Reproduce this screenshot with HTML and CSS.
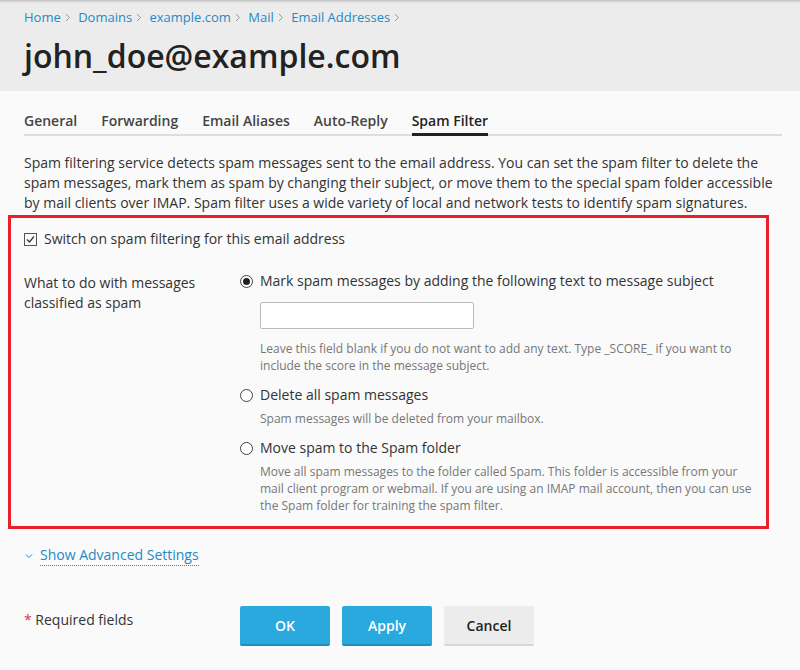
FILE: index.html
```html
<!DOCTYPE html>
<html lang="en">
<head>
    <meta charset="UTF-8">
    <title>john_doe@example.com</title>
    <link rel="stylesheet" href="styles.css">
</head>
<body>

<!--Page header-->
<div class="header">
    <div class="breadcrumbs">
        <a href="#">Home</a><svg class="sep" width="6" height="9" viewBox="0 0 6 9"><path d="M1 1 L4.5 4.5 L1 8" fill="none" stroke="#999" stroke-width="1"/></svg>
        <a href="#">Domains</a><svg class="sep" width="6" height="9" viewBox="0 0 6 9"><path d="M1 1 L4.5 4.5 L1 8" fill="none" stroke="#999" stroke-width="1"/></svg>
        <a href="#">example.com</a><svg class="sep" width="6" height="9" viewBox="0 0 6 9"><path d="M1 1 L4.5 4.5 L1 8" fill="none" stroke="#999" stroke-width="1"/></svg>
        <a href="#">Mail</a><svg class="sep" width="6" height="9" viewBox="0 0 6 9"><path d="M1 1 L4.5 4.5 L1 8" fill="none" stroke="#999" stroke-width="1"/></svg>
        <a href="#">Email Addresses</a><svg class="sep" width="6" height="9" viewBox="0 0 6 9"><path d="M1 1 L4.5 4.5 L1 8" fill="none" stroke="#999" stroke-width="1"/></svg>
    </div>
    <h1>john_doe@example.com</h1>
</div>

<div class="content">
    <!--Tabs-->
    <div class="tabs">
        <a href="#" class="tab">General</a>
        <a href="#" class="tab">Forwarding</a>
        <a href="#" class="tab">Email Aliases</a>
        <a href="#" class="tab">Auto-Reply</a>
        <a href="#" class="tab active">Spam Filter</a>
    </div>

    <p class="intro">Spam filtering service detects spam messages sent to the email address. You can set the spam filter to delete the spam messages, mark them as spam by changing their subject, or move them to the special spam folder accessible by mail clients over IMAP. Spam filter uses a wide variety of local and network tests to identify spam signatures.</p>

    <!--Highlighted settings-->
    <div class="highlight">
        <label class="check-row">
            <span class="checkbox">
                <svg width="13" height="13" viewBox="0 0 13 13"><path d="M3 6.5 L5.5 9 L10 3.5" fill="none" stroke="#333" stroke-width="1.2"/></svg>
            </span>
            Switch on spam filtering for this email address
        </label>

        <div class="form-row">
            <div class="form-label">What to do with messages classified as spam</div>
            <div class="form-field">
                <div class="option">
                    <label class="radio-row"><span class="radio checked"></span>Mark spam messages by adding the following text to message subject</label>
                    <input type="text" class="text-input">
                    <div class="hint">Leave this field blank if you do not want to add any text. Type _SCORE_ if you want to include the score in the message subject.</div>
                </div>
                <div class="option">
                    <label class="radio-row"><span class="radio"></span>Delete all spam messages</label>
                    <div class="hint">Spam messages will be deleted from your mailbox.</div>
                </div>
                <div class="option">
                    <label class="radio-row"><span class="radio"></span>Move spam to the Spam folder</label>
                    <div class="hint">Move all spam messages to the folder called Spam. This folder is accessible from your mail client program or webmail. If you are using an IMAP mail account, then you can use the Spam folder for training the spam filter.</div>
                </div>
            </div>
        </div>
    </div>

    <div class="advanced">
        <svg width="8" height="6" viewBox="0 0 8 6"><path d="M1 1.5 L4 4.5 L7 1.5" fill="none" stroke="#1f8ac6" stroke-width="1"/></svg>
        <a href="#">Show Advanced Settings</a>
    </div>

    <!--Buttons-->
    <div class="actions">
        <div class="required"><span class="star">*</span> Required fields</div>
        <div class="buttons">
            <button class="btn primary">OK</button>
            <button class="btn primary">Apply</button>
            <button class="btn">Cancel</button>
        </div>
    </div>
</div>

</body>
</html>
```

FILE: styles.css
```css
/* Base */
body {
    margin: 0;
    font-family: "Open Sans", Arial, sans-serif;
    font-size: 14px;
    color: #333;
    background-color: #fafafa;
}

a {
    color: #1f8ac6;
    text-decoration: none;
}

/* Header band */
.header {
    background-color: #ececec;
    padding: 8px 24px 14px;
    box-shadow: inset 0 3px 3px -2px rgba(0, 0, 0, 0.25);
}

.breadcrumbs {
    font-size: 13px;
    line-height: 18px;
}

.breadcrumbs .sep {
    margin: 0 4px;
}

.header h1 {
    margin: 9px 0 0;
    font-size: 32px;
    font-weight: 600;
    line-height: 42px;
    color: #222;
}

/* Main content */
.content {
    padding: 20px 18px 0 24px;
}

.tabs {
    display: flex;
    gap: 24px;
    border-bottom: 2px solid #ddd;
}

.tab {
    color: #444;
    font-weight: 600;
    line-height: 20px;
    padding-bottom: 2px;
    margin-bottom: -2px;
    border-bottom: 3px solid transparent;
}

.tab.active {
    color: #222;
    border-bottom-color: #222;
}

.intro {
    margin: 17px 0 2px;
    line-height: 20px;
}

/* Red outline */
.highlight {
    margin-left: -16px;
    margin-right: 13px;
    border: 3px solid #e8202b;
    padding: 11px 13px 12px;
}

.check-row {
    display: flex;
    align-items: center;
    gap: 7px;
    line-height: 20px;
}

.checkbox {
    width: 11px;
    height: 11px;
    border: 1px solid #555;
    display: flex;
}

.checkbox svg {
    margin: -1px;
}

.form-row {
    display: flex;
    margin-top: 22px;
}

.form-label {
    width: 190px;
    line-height: 20px;
    padding-top: 2px;
}

.form-field {
    flex: 1;
    padding-left: 26px;
}

.option {
    margin-bottom: 11px;
}

.option:last-child {
    margin-bottom: 0;
}

.radio-row {
    display: flex;
    align-items: center;
    gap: 7px;
    line-height: 20px;
}

.radio {
    width: 11px;
    height: 11px;
    border: 1px solid #444;
    border-radius: 50%;
    background: #fff;
    position: relative;
}

.radio.checked::after {
    content: "";
    position: absolute;
    left: 2px;
    top: 2px;
    width: 7px;
    height: 7px;
    border-radius: 50%;
    background: #222;
}

.text-input {
    display: block;
    margin: 11px 0 11px 20px;
    width: 214px;
    height: 27px;
    box-sizing: border-box;
    border: 1px solid #bbb;
    border-radius: 2px;
    background: #fff;
}

.hint {
    margin: 5px 0 0 20px;
    font-size: 12px;
    line-height: 17px;
    color: #777;
}

/* Advanced link */
.advanced {
    margin-top: 16px;
    display: flex;
    align-items: center;
    gap: 7px;
    padding-left: 1px;
}

.advanced a {
    border-bottom: 1px dotted #1f8ac6;
    line-height: 20px;
}

/* Footer actions */
.actions {
    display: flex;
    margin-top: 40px;
}

.required {
    width: 216px;
    padding-top: 4px;
}

.star {
    color: #d0394f;
}

.buttons {
    display: flex;
    gap: 12px;
}

.btn {
    height: 40px;
    min-width: 90px;
    padding: 0 20px;
    font-family: "Open Sans", Arial, sans-serif;
    font-size: 14px;
    font-weight: 600;
    border: none;
    border-bottom: 2px solid #d6d6d6;
    border-radius: 2px;
    background-color: #ececec;
    color: #222;
    cursor: pointer;
}

.btn.primary {
    background-color: #29a9dd;
    border-bottom-color: #1f8fc0;
    color: #fff;
}
```
